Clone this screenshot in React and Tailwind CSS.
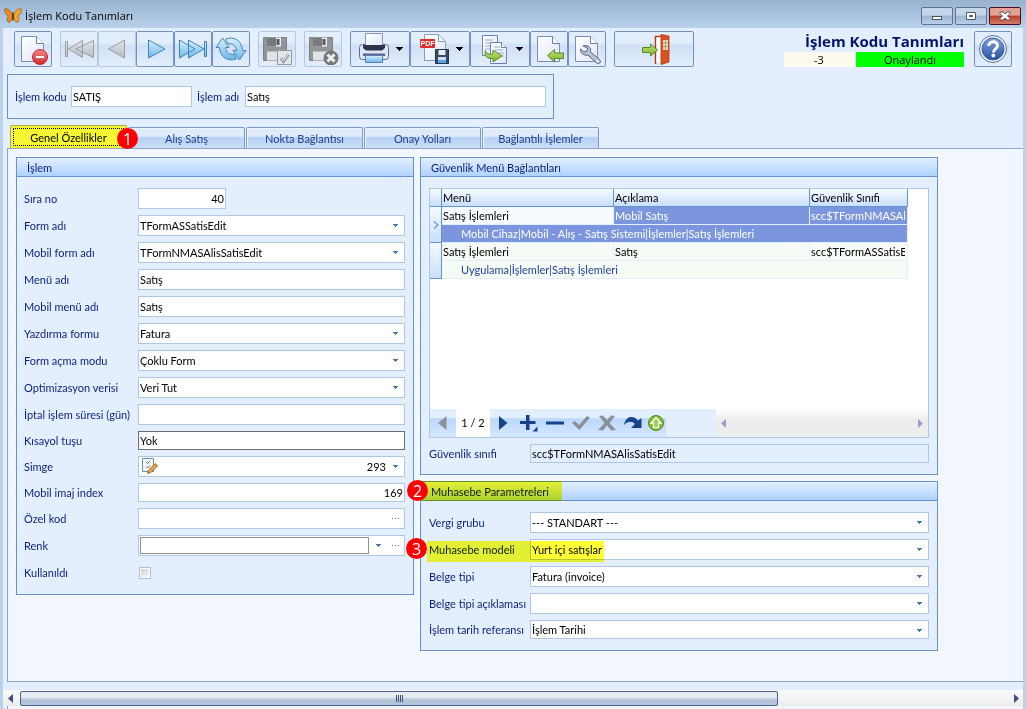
// src/App.jsx
const GRID_ROWS = [
  {
    menu: "Satış İşlemleri",
    desc: "Mobil Satış",
    cls: "scc$TFormNMASAlisSatisEdit",
    path: "Mobil Cihaz|Mobil - Alış - Satış Sistemi|İşlemler|Satış İşlemleri",
    selected: true,
  },
  {
    menu: "Satış İşlemleri",
    desc: "Satış",
    cls: "scc$TFormASSatisEdit",
    path: "Uygulama|İşlemler|Satış İşlemleri",
  },
];

const TABS = ["Genel Özellikler", "Alış Satış", "Nokta Bağlantısı", "Onay Yolları", "Bağlantılı İşlemler"];

const FIELD = "block w-full min-w-0 border bg-white pl-px pr-1 outline-none";

/* ---------- small parts ---------- */

function Badge({ n, className }) {
  return (
    <span
      className={`absolute z-10 flex h-[21px] w-[21px] items-center justify-center rounded-full bg-[#fe0000] font-['Open_Sans',sans-serif] text-base leading-none text-white ${className}`}
    >
      {n}
    </span>
  );
}

function Caret({ className }) {
  return (
    <svg viewBox="0 0 5 3" className={`pointer-events-none absolute h-[3px] w-[5px] ${className}`} shapeRendering="crispEdges">
      <path d="M0 0h5v1H4v1H3v1H2V2H1V1H0z" fill="#4a74b0" />
    </svg>
  );
}

function Dots() {
  return (
    <svg viewBox="0 0 8 1" className="h-px w-2" shapeRendering="crispEdges">
      <path d="M0 0h1v1H0zM3 0h1v1H3zM6 0h1v1H6z" fill="#4a74b0" />
    </svg>
  );
}

function Row({ id, label, labelWidth = "w-[114px]", children }) {
  return (
    <div className="flex items-center">
      <label htmlFor={id} className={`${labelWidth} shrink-0 whitespace-nowrap text-[#0c1f7a]`}>
        {label}
      </label>
      <div className="relative min-w-0 flex-1">{children}</div>
    </div>
  );
}

function TextField({ id, value = "", short, className = "border-[#b1c6e4]" }) {
  return <input id={id} type="text" defaultValue={value} className={`${FIELD} ${short ? "h-[19px]" : "h-[21px]"} ${className}`} />;
}

function SelectField({ id, value = "", short }) {
  return (
    <>
      <select id={id} defaultValue={value} className={`${FIELD} appearance-none border-[#b1c6e4] ${short ? "h-[19px]" : "h-[21px]"}`}>
        <option>{value}</option>
      </select>
      <Caret className="right-[7px] top-[9px]" />
    </>
  );
}

function Panel({ title, highlight, children }) {
  return (
    <section className="relative border border-[#6593cf] bg-[#e3efff]">
      <h2 className="relative h-[19px] border-b border-[#6593cf] bg-linear-to-b from-[#e3efff] to-[#afd2ff] pl-2.5 leading-[19px] text-[#0c1f7a]">
        {title}
        {highlight && <span className="absolute -top-px left-0 h-5 w-[141px] bg-[#ffff33] mix-blend-multiply" />}
      </h2>
      <div className="px-2 py-[11px]">{children}</div>
    </section>
  );
}

/* ---------- toolbar ---------- */

function ToolButton({ label, wide, disabled, menu, children }) {
  return (
    <button
      type="button"
      aria-label={label}
      disabled={disabled}
      className={`flex h-9 items-center justify-center rounded-xs border bg-linear-to-b from-[#e3eefc] from-30% via-[#d0e0f5] via-40% to-[#e3eefc] ${
        disabled ? "border-[#b5c8e2]" : "border-[#7492c0]"
      } ${wide ? "w-20" : menu ? "w-[60px] gap-1.5" : "w-[38px]"}`}
    >
      {children}
      {menu && (
        <svg viewBox="0 0 7 4" className="h-1 w-[7px]" shapeRendering="crispEdges">
          <path d="M0 0h7v1H6v1H5v1H4v1H3V3H2V2H1V1H0z" fill="#000" />
        </svg>
      )}
    </button>
  );
}

function Icon({ children }) {
  return (
    <svg viewBox="0 0 32 32" className="h-8 w-8 shrink-0" fill="none">
      {children}
    </svg>
  );
}

function Gradients() {
  return (
    <svg className="absolute h-0 w-0" aria-hidden="true">
      <defs>
        <linearGradient id="blue" x1="0" y1="0" x2="0" y2="1">
          <stop offset="0" stopColor="#d9f0fd" />
          <stop offset="1" stopColor="#6cb6e8" />
        </linearGradient>
        <linearGradient id="gray" x1="0" y1="0" x2="0" y2="1">
          <stop offset="0" stopColor="#e2e4e8" />
          <stop offset="1" stopColor="#b9bcc2" />
        </linearGradient>
        <linearGradient id="green" x1="0" y1="0" x2="0" y2="1">
          <stop offset="0" stopColor="#c8e67c" />
          <stop offset="1" stopColor="#76b32c" />
        </linearGradient>
        <linearGradient id="page" x1="0" y1="0" x2="1" y2="1">
          <stop offset="0" stopColor="#fff" />
          <stop offset="1" stopColor="#dfe6fa" />
        </linearGradient>
        <linearGradient id="red" x1="0" y1="0" x2="0" y2="1">
          <stop offset="0" stopColor="#f98a84" />
          <stop offset="1" stopColor="#d8232a" />
        </linearGradient>
        <linearGradient id="orb" x1="0" y1="0" x2="0" y2="1">
          <stop offset="0" stopColor="#7fa5e0" />
          <stop offset="1" stopColor="#2450a8" />
        </linearGradient>
      </defs>
    </svg>
  );
}

function Sheet() {
  return (
    <>
      <path d="M4.500 3.500h15l7 7v18h-22z" fill="url(#page)" stroke="#7d8cbd" />
      <path d="M19.500 3.500v7h7" fill="#fff" stroke="#6f7fb5" />
    </>
  );
}

function NewIcon() {
  return (
    <Icon>
      <Sheet />
      <circle cx="23" cy="24" r="7.500" fill="url(#red)" stroke="#c3262c" />
      <rect x="18.500" y="22.500" width="9" height="3" rx=".5" fill="#fff" stroke="#a8383a" strokeWidth=".6" />
    </Icon>
  );
}

function RefreshIcon() {
  return (
    <Icon>
      <path d="M1 14.500 7.500 5l6.500 9.500h-3.500c.5 5 4 7.500 8.500 6.500l2.500 5C13 29 5 24.500 4.500 14.500z" fill="url(#blue)" stroke="#4687b8" />
      <path d="M31 17.500 24.500 27 18 17.500h3.500C21 12.500 17.500 10 13 11L10.500 6C19 3 27 7.500 27.500 17.500z" fill="url(#blue)" stroke="#4687b8" />
    </Icon>
  );
}

function FloppyGray() {
  return (
    <>
      <path d="M2.500 4.500h23v23h-23z" fill="#929497" stroke="#7d7f82" />
      <path d="M6 4.500h14v9H6z" fill="#eceef0" />
      <path d="M6 4.500h9v9H6z" fill="#77797c" />
      <path d="M15.500 6h3v6h-3z" fill="#55575a" />
      <path d="M6 18.500h16v9H6z" fill="#dfe2e6" />
    </>
  );
}

function SaveOkIcon() {
  return (
    <Icon>
      <FloppyGray />
      <rect x="16.500" y="17.500" width="14" height="14" fill="#e1e4e8" stroke="#96999e" />
      <path d="m20 25 2.500 3.500 5-7" stroke="#96999e" strokeWidth="3" />
      <path d="m20.500 25.200 2 2.500 4.500-6" stroke="#f4f5f6" />
    </Icon>
  );
}

function SaveCancelIcon() {
  return (
    <Icon>
      <FloppyGray />
      <circle cx="24" cy="25" r="7" fill="#77797d" stroke="#696b6e" />
      <path d="m20.500 21.500 7 7m0-7-7 7" stroke="#eee" strokeWidth="3" />
    </Icon>
  );
}

function PrintIcon() {
  return (
    <Icon>
      <rect x="1.500" y="11.500" width="29" height="15" rx="3" fill="#dfe6f4" stroke="#5a6998" />
      <path d="M7.500.500h17v14h-17z" fill="url(#page)" stroke="#8b97b8" />
      <path d="M5 12h22v3l-3 2.500H8L5 15z" fill="#2c3548" />
      <path d="M5 20.500h22V23H5z" fill="#59668d" />
      <path d="M7.500 22.500h17v7h-17z" fill="url(#blue)" stroke="#5a7fb4" />
    </Icon>
  );
}

function PdfIcon() {
  return (
    <Icon>
      <path d="M6.500 1.500h14l7 7v19h-21z" fill="url(#page)" stroke="#8a98c4" />
      <path d="M20.500 1.500v7h6" fill="#fff" stroke="#8a98c4" />
      <rect x="2" y="6" width="15" height="9" rx="1" fill="#d62f2a" />
      <text x="9.500" y="13" fontSize="7" fontWeight="bold" fontFamily="Liberation Sans, sans-serif" textAnchor="middle" fill="#fff">
        PDF
      </text>
      <path d="M17.500 16.500h13v14h-13z" fill="#39496c" stroke="#27344f" />
      <path d="M20.500 17h7v5h-7z" fill="#e8edf5" />
      <path d="M20 24h8v6h-8z" fill="#cfdcf0" />
      <path d="M20 27h8v3h-8z" fill="#5aa5e2" />
    </Icon>
  );
}

function CopyIcon() {
  return (
    <Icon>
      <path d="M4.500 2.500h15v20h-15z" fill="url(#page)" stroke="#6f7fb5" />
      <path d="M7 7h8M7 10h6M7 13h6M7 16h5" stroke="#9daad0" />
      <path d="M12.500 9.500h11l5 5v16h-16z" fill="url(#page)" stroke="#6f7fb5" />
      <path d="M23.500 9.500v5h5" fill="#fff" stroke="#6f7fb5" />
      <path d="M16 14h6M17 17h8M20 20h6M20 23h6" stroke="#9daad0" />
      <path d="M7.500 17.500c.5 3.500 3.500 4 7.500 3.500V17l9 6-9 6v-3.500c-5.500.5-9-2-7.500-8z" fill="url(#green)" stroke="#55892a" />
    </Icon>
  );
}

function ImportIcon() {
  return (
    <Icon>
      <Sheet />
      <path d="m14.500 22.500 7-6V20h9v5.500h-9V29z" fill="url(#green)" stroke="#55892a" />
    </Icon>
  );
}

function WrenchIcon() {
  return (
    <Icon>
      <Sheet />
      <path
        d="M12 13c4.500-2 8.500 1.500 7.500 6l9 7.500c2.500 2.500-.5 5.500-3 3.500L17 22c-4.500 1-8-2-7.500-6l3.500 3 3-1 .5-3z"
        fill="#b8c3d6"
        stroke="#56647f"
      />
      <circle cx="26.500" cy="28" r="1" fill="#fff" />
    </Icon>
  );
}

function DoorIcon() {
  return (
    <Icon>
      <path d="M17.500 31V3.500h8" stroke="#b93a16" strokeWidth="1.500" />
      <path d="M18.500 4.500h6v25h-6z" fill="#fff" />
      <path d="M23 1.500 31 3v26l-8 2.500z" fill="#d9521f" stroke="#b13a12" strokeWidth=".8" />
      <path d="M25 7h5v10h-5z" fill="#efe8cf" />
      <path d="M27.500 7v10M25 10h5M25 13.500h5" stroke="#c98a5c" />
      <path d="M4.500 14.500h8V11l7 6-7 6v-3.500h-8z" fill="url(#green)" stroke="#55892a" />
    </Icon>
  );
}

function HelpIcon() {
  return (
    <Icon>
      <circle cx="16" cy="16" r="13.500" fill="#eef3fb" stroke="#5f7396" />
      <circle cx="16" cy="16" r="11" fill="url(#orb)" stroke="#3a5f9f" />
      <path d="M11.800 13c0-5.500 8.700-5.500 8.700-.5 0 3.500-4 3.300-4 7" stroke="#fff" strokeWidth="3" />
      <circle cx="16.300" cy="22.500" r="1.900" fill="#fff" />
    </Icon>
  );
}

function Toolbar() {
  return (
    <div className="flex items-start gap-2 px-[11px] pt-[3px]">
      <ToolButton label="Yeni kayıt"><NewIcon /></ToolButton>
      <div className="flex">
        <ToolButton label="İlk kayıt" disabled>
          <Icon>
            <path d="M2.500 8.500h2v15h-2zM19.500 7.500v17L5.500 16zM30.500 7.500v17L12.500 16z" fill="url(#gray)" stroke="#9b9ea4" />
          </Icon>
        </ToolButton>
        <ToolButton label="Önceki kayıt" disabled>
          <Icon><path d="M23.500 7v18L7.500 16z" fill="url(#gray)" stroke="#9b9ea4" /></Icon>
        </ToolButton>
        <ToolButton label="Sonraki kayıt">
          <Icon><path d="M9.500 7v18l16.500-9z" fill="url(#blue)" stroke="#3d84bb" /></Icon>
        </ToolButton>
        <ToolButton label="Son kayıt">
          <Icon>
            <path d="M27.500 8.500h2v15h-2zM2.500 7v18L18 16zM11.500 7v18L27 16z" fill="url(#blue)" stroke="#3d84bb" />
          </Icon>
        </ToolButton>
        <ToolButton label="Yenile"><RefreshIcon /></ToolButton>
      </div>
      <ToolButton label="Kaydet" disabled><SaveOkIcon /></ToolButton>
      <ToolButton label="Vazgeç" disabled><SaveCancelIcon /></ToolButton>
      <div className="flex">
        <ToolButton label="Yazdır" menu><PrintIcon /></ToolButton>
        <ToolButton label="PDF kaydet" menu><PdfIcon /></ToolButton>
        <ToolButton label="Kopyala" menu><CopyIcon /></ToolButton>
        <ToolButton label="İçe al"><ImportIcon /></ToolButton>
        <ToolButton label="Ayarlar"><WrenchIcon /></ToolButton>
      </div>
      <ToolButton label="Çıkış" wide><DoorIcon /></ToolButton>

      <div className="ml-auto w-[180px] font-['Open_Sans',sans-serif]">
        <h1 className="whitespace-nowrap text-right text-[15px] font-bold leading-[21px] text-[#00146e]">İşlem Kodu Tanımları</h1>
        <div className="flex gap-0.5 text-center text-[11px] leading-4">
          <span className="h-[15px] w-[70px] bg-[#fffaee]">-3</span>
          <span className="h-[15px] flex-1 bg-[#00ff00]">Onaylandı</span>
        </div>
      </div>
      <div className="pl-0.5">
        <ToolButton label="Yardım"><HelpIcon /></ToolButton>
      </div>
    </div>
  );
}

/* ---------- window caption ---------- */

function CaptionButton({ label, close, children }) {
  return (
    <button
      type="button"
      aria-label={label}
      className={`flex h-[18px] w-8 items-center justify-center rounded-xs border ${
        close
          ? "border-[#4a0f1b] bg-linear-to-b from-[#e2a192] from-45% via-[#b93c26] via-50% to-[#d07c68]"
          : "border-[#5c7391] bg-linear-to-b from-[#c3d6ea] from-45% via-[#9db5d0] via-50% to-[#b9d0e8]"
      }`}
    >
      <svg viewBox="0 0 12 10" className="h-2.5 w-3" fill="#fff" stroke="#4b5563">
        {children}
      </svg>
    </button>
  );
}

function TitleBar() {
  return (
    <header className="flex h-7 items-center bg-linear-to-b from-[#98b2cf] to-[#b9d1ea] pl-1 pr-[5px] pt-1">
      <svg viewBox="0 0 18 16" className="mr-[3px] h-4 w-[18px]">
        <path d="M8.500 7C7 2 3 0 .5 1c0 3.500 1.500 6 4 7-2 1.500-1.500 5 0 6.500C7 14 8.500 11 8.500 8z" fill="#e88a1c" stroke="#8a4a0a" strokeWidth=".6" />
        <path d="M9.500 7C11 2 15 0 17.500 1c0 3.500-1.500 6-4 7 2 1.500 1.500 5 0 6.500C11 14 9.500 11 9.500 8z" fill="#f2a52b" stroke="#8a4a0a" strokeWidth=".6" />
        <path d="M9 4.500v8" stroke="#3b2208" strokeWidth="1.300" />
      </svg>
      <span className="font-['Open_Sans',sans-serif] text-[11px] text-black">İşlem Kodu Tanımları</span>
      <div className="ml-auto flex gap-0.5">
        <CaptionButton label="Simge durumuna küçült"><rect x="1.500" y="5.500" width="9" height="3" /></CaptionButton>
        <CaptionButton label="Ekranı kapla">
          <path d="M1.500 1.500h9v7h-9zM4.500 4.500h3v1h-3z" fillRule="evenodd" />
        </CaptionButton>
        <CaptionButton label="Kapat" close>
          <path d="M1 1h3l2 2 2-2h3v1.500L8.500 5 11 7.500V9H8L6 7 4 9H1V7.500L3.500 5 1 2.500z" />
        </CaptionButton>
      </div>
    </header>
  );
}

/* ---------- header fields and tabs ---------- */

function HeaderFields() {
  return (
    <div className="ml-1 mt-[7px] flex h-[45px] w-[547px] items-center border border-[#6593cf] px-[7px] text-[#0c1f7a]">
      <label htmlFor="kod" className="w-14 shrink-0 whitespace-nowrap">İşlem kodu</label>
      <input id="kod" defaultValue="SATIŞ" className="h-[21px] w-[121px] border border-[#b1c6e4] bg-white pl-px text-black outline-none" />
      <label htmlFor="ad" className="ml-[5px] w-12 shrink-0 whitespace-nowrap">İşlem adı</label>
      <input id="ad" defaultValue="Satış" className="h-[21px] min-w-0 flex-1 border border-[#b1c6e4] bg-white pl-px text-black outline-none" />
    </div>
  );
}

function TabBar() {
  return (
    <div role="tablist" className="mt-1.5 flex h-[23px] items-end gap-px pl-[7px]">
      {TABS.map((tab, i) => (
        <div key={tab} className="relative">
          <button
            type="button"
            role="tab"
            aria-selected={i === 0}
            className={
              i === 0
                ? "block h-[23px] w-[117px] rounded-t-xs border border-b-0 border-[#a9a94c] bg-[#f6f733] p-0.5 text-black"
                : "block h-[21px] w-[117px] rounded-t-xs border border-b-0 border-[#7f9cc9] bg-linear-to-b from-[#dfebfb] from-40% via-[#b7d1f5] via-50% to-[#c9def8] pt-0.5 text-[#1e3f8e] shadow-[inset_1px_1px_0_#eef5ff]"
            }
          >
            {i === 0 ? <span className="block h-[18px] border border-dotted border-black leading-[18px]">{tab}</span> : tab}
          </button>
          {i === 0 && <Badge n={1} className="left-[107px] top-[3px]" />}
        </div>
      ))}
    </div>
  );
}

/* ---------- panels ---------- */

function ProcessPanel() {
  return (
    <Panel title="İşlem">
      <div className="-ml-px flex flex-col gap-1.5">
        <Row id="sira" label="Sıra no">
          <input id="sira" defaultValue="40" className="block h-[21px] w-[88px] border border-[#b1c6e4] bg-white pr-px text-right outline-none" />
        </Row>
        <Row id="form" label="Form adı"><SelectField id="form" value="TFormASSatisEdit" /></Row>
        <Row id="mform" label="Mobil form adı"><SelectField id="mform" value="TFormNMASAlisSatisEdit" /></Row>
        <Row id="menu" label="Menü adı"><TextField id="menu" value="Satış" /></Row>
        <Row id="mmenu" label="Mobil menü adı"><TextField id="mmenu" value="Satış" /></Row>
        <Row id="yazdirma" label="Yazdırma formu"><SelectField id="yazdirma" value="Fatura" /></Row>
        <Row id="acma" label="Form açma modu"><SelectField id="acma" value="Çoklu Form" /></Row>
        <Row id="opt" label="Optimizasyon verisi"><SelectField id="opt" value="Veri Tut" /></Row>
        <Row id="iptal" label="İptal işlem süresi (gün)"><TextField id="iptal" /></Row>
        <Row id="kisayol" label="Kısayol tuşu"><TextField id="kisayol" value="Yok" short className="border-[#6d6d6d]" /></Row>
        <Row id="simge" label="Simge">
          <input id="simge" defaultValue="293" className="block h-[21px] w-full border border-[#b1c6e4] bg-white pr-[18px] text-right outline-none" />
          <svg viewBox="0 0 16 16" className="pointer-events-none absolute left-1 top-0.5 h-4 w-4">
            <path d="M.5.500h11v13H.5z" fill="#f4f8ff" stroke="#7488b8" />
            <path d="m4 4 1.500 1.500L8 3M4 8.500 5.500 10 8 7.500" fill="none" stroke="#3a7a2b" />
            <path d="M13.500 5.500 15.500 8 9 14.500l-3.500 1 1-3.500z" fill="#e9a348" stroke="#8a5a1f" strokeWidth=".8" />
          </svg>
          <Caret className="right-[7px] top-[9px]" />
        </Row>
        <Row id="imaj" label="Mobil imaj index">
          <input id="imaj" defaultValue="169" className="block h-[19px] w-full border border-[#b1c6e4] bg-white pr-px text-right outline-none" />
          <Badge n={2} className="-right-[23px] -top-[3px]" />
        </Row>
        <Row id="ozel" label="Özel kod">
          <TextField id="ozel" />
          <button type="button" aria-label="Özel kod seç" className="absolute right-0 top-0 flex h-full w-[19px] items-center justify-center"><Dots /></button>
        </Row>
        <Row id="renk" label="Renk">
          <div className="flex h-[21px] items-center border border-[#b1c6e4] bg-white pl-px">
            <input id="renk" className="h-[17px] min-w-0 flex-1 border border-[#8f8f8f] outline-none" />
            <span className="w-[35px]" />
          </div>
          <Caret className="right-6 top-[9px]" />
          <button type="button" aria-label="Renk seç" className="absolute right-0 top-0 flex h-full w-[19px] items-center justify-center"><Dots /></button>
          <Badge n={3} className="-right-[22px] top-[3px]" />
        </Row>
        <Row id="kullanildi" label="Kullanıldı">
          <div className="flex h-[21px] items-center pl-px">
            <input
              id="kullanildi"
              type="checkbox"
              className="h-3 w-3 appearance-none border border-[#a9c0e0] bg-linear-to-br from-[#c9ced6] to-[#fbfbfb] shadow-[inset_0_0_0_1px_#fff]"
            />
          </div>
        </Row>
      </div>
    </Panel>
  );
}

function SecurityTable() {
  return (
    <table className="w-[calc(100%-20px)] table-fixed border-separate border-spacing-0">
      <colgroup>
        <col className="w-3" />
        <col className="w-[172px]" />
        <col />
        <col className="w-[98px]" />
      </colgroup>
      <thead>
        <tr className="h-[18px]">
          {["", "Menü", "Açıklama", "Güvenlik Sınıfi"].map((h, i) => (
            <th
              key={i}
              className="border-b border-r border-[#6593cf] bg-linear-to-b from-[#f8fbff] to-[#c9dffb] p-0 pl-px text-left font-normal leading-[17px]"
            >
              {h}
            </th>
          ))}
        </tr>
      </thead>
      {GRID_ROWS.map((row) => {
        const cell = row.selected ? "bg-[#7b96df] text-white" : "bg-[#f5fcf5]";
        return (
          <tbody key={row.path} className="leading-[17px]">
            <tr className="h-[18px]">
              <td rowSpan={2} className="border-b border-r border-[#6593cf] bg-linear-to-b from-[#f4f9ff] to-[#c9dffb] p-0">
                {row.selected && (
                  <svg viewBox="0 0 6 8" className="mx-auto h-2 w-1.5" fill="none">
                    <path d="m1 .5 4 3.500-4 3.500" stroke="#6f9fdc" strokeWidth="1.500" />
                  </svg>
                )}
              </td>
              <td className={`border-b border-r border-[#e3efff] p-0 pl-px ${row.selected ? "bg-[#f5fbff]" : "bg-[#f5fcf5]"}`}>{row.menu}</td>
              <td className={`border-b border-r border-[#e3efff] p-0 pl-px ${cell}`}>{row.desc}</td>
              <td className={`border-b border-r border-[#e3efff] p-0 pl-px pr-0.5 ${cell}`}>
                <div className="overflow-hidden whitespace-nowrap">{row.cls}</div>
              </td>
            </tr>
            <tr className="h-[18px]">
              <td
                colSpan={3}
                className={`border-b border-r border-[#e3efff] p-0 pl-[19px] ${row.selected ? "bg-[#7b96df] text-white" : "bg-[#f5fcf5] text-[#1e3f9e]"}`}
              >
                {row.path}
              </td>
            </tr>
          </tbody>
        );
      })}
    </table>
  );
}

function NavButton({ label, width = "w-[26px]", children }) {
  return (
    <button type="button" aria-label={label} className={`flex shrink-0 items-center justify-center ${width}`}>
      <svg viewBox="0 0 18 18" className="h-[18px] w-[18px] shrink-0" fill="#15428b">
        {children}
      </svg>
    </button>
  );
}

function Navigator() {
  return (
    <div className="flex h-7 bg-[#e3efff]">
      <div className="flex w-[236px] bg-linear-to-b from-[#e3efff] from-30% via-[#bcd8ff] via-35% to-[#d5e7ff]">
        <NavButton label="Önceki"><path d="M12.500 2v14L4 9z" fill="#8d9096" /></NavButton>
        <span className="flex w-[34px] shrink-0 items-center justify-center bg-white">1 / 2</span>
        <NavButton label="Sonraki"><path d="M5 2v14l8.500-7z" /></NavButton>
        <NavButton label="Ekle"><path d="M6 1h3.500v6h6v3h-6v6H6v-6H0V7h6zM17.500 12.500v5h-5z" /></NavButton>
        <NavButton label="Sil"><path d="M0 7.500h18v3H0z" /></NavButton>
        <NavButton label="Onayla"><path d="m0 9 3-2 4 4 8-9 3 1.500L7.500 16z" fill="#8d9096" /></NavButton>
        <NavButton label="İptal"><path d="m1 2 4-.5L9 6l4-4.500 4 .5-5.500 7 6.500 7-5 .5-4-5-4 5-5-.5 6.500-7z" fill="#8d9096" /></NavButton>
        <NavButton label="Yenile"><path d="M0 11C2 2 9 1 14 6.500L17.500 4v10H7l4-4C7.500 6.500 3.500 7.500 0 11z" /></NavButton>
        <NavButton label="Yukarı" width="w-5">
          <circle cx="9" cy="9" r="7.500" fill="#84bf2f" stroke="#4c8a1b" />
          <path d="m9 3.500 5 5.500h-2.500v4.500h-5V9H4z" fill="#9ccc4a" stroke="#fff" strokeWidth="1.300" />
        </NavButton>
      </div>
      <div className="flex-1" />
      <div className="flex w-[212px] items-center justify-between bg-linear-to-b from-white to-[#ededed] to-40% px-[5px]">
        <svg viewBox="0 0 5 9" className="h-[9px] w-[5px]"><path d="M5 0v9L0 4.500z" fill="#93a3c8" /></svg>
        <svg viewBox="0 0 5 9" className="h-[9px] w-[5px]"><path d="M0 0v9l5-4.500z" fill="#93a3c8" /></svg>
      </div>
    </div>
  );
}

function SecurityPanel() {
  return (
    <Panel title="Güvenlik Menü Bağlantıları">
      <div className="flex h-[250px] flex-col justify-between border border-[#b1c6e4] bg-white">
        <SecurityTable />
        <Navigator />
      </div>
      <div className="mt-1.5">
        <Row id="sinif" label="Güvenlik sınıfi" labelWidth="w-[101px]">
          <input
            id="sinif"
            readOnly
            value="scc$TFormNMASAlisSatisEdit"
            className="block h-[19px] w-full border border-[#b1c6e4] bg-[#e3efff] pl-px outline-none"
          />
        </Row>
      </div>
    </Panel>
  );
}

function AccountingPanel() {
  return (
    <Panel title="Muhasebe Parametreleri" highlight>
      <div className="flex flex-col gap-1.5">
        <Row id="vergi" label="Vergi grubu" labelWidth="w-[101px]"><SelectField id="vergi" value="--- STANDART ---" /></Row>
        <div className="relative">
          <Row id="model" label="Muhasebe modeli" labelWidth="w-[101px]"><SelectField id="model" value="Yurt içi satışlar" /></Row>
          <span className="pointer-events-none absolute -left-0.5 top-0.5 h-[21px] w-[177px] bg-[#ffff33] mix-blend-multiply" />
        </div>
        <Row id="belge" label="Belge tipi" labelWidth="w-[101px]"><SelectField id="belge" value="Fatura (invoice)" /></Row>
        <Row id="belgeac" label="Belge tipi açıklaması" labelWidth="w-[101px]"><SelectField id="belgeac" /></Row>
        <Row id="tarih" label="İşlem tarih referansı" labelWidth="w-[101px]"><SelectField id="tarih" value="İşlem Tarihi" short /></Row>
      </div>
    </Panel>
  );
}

function ScrollBar() {
  return (
    <div className="mt-2 flex h-4 items-center bg-linear-to-b from-[#fbfbfb] to-[#ececec] pl-[5px] pr-1">
      <svg viewBox="0 0 5 9" className="mr-[7px] h-[9px] w-[5px]"><path d="M5 0v9L0 4.500z" fill="#3d4f7d" /></svg>
      <div className="flex h-[15px] w-3/4 items-center justify-center gap-px rounded-xs border border-[#4d6090] bg-linear-to-b from-[#e6ecf1] from-40% to-[#b3c4da] to-60%">
        <span className="h-[7px] w-px bg-[#3d4f7d]" />
        <span className="h-[7px] w-px bg-[#3d4f7d]" />
        <span className="h-[7px] w-px bg-[#3d4f7d]" />
        <span className="h-[7px] w-px bg-[#3d4f7d]" />
      </div>
      <svg viewBox="0 0 5 9" className="ml-auto h-[9px] w-[5px]"><path d="M0 0v9l5-4.500z" fill="#3d4f7d" /></svg>
    </div>
  );
}

export default function App() {
  return (
    <div className="flex min-h-screen flex-col bg-[#b9d1ea] font-[Lato,'Noto_Sans',sans-serif] text-[11px] leading-[14px] text-black">
      <Gradients />
      <TitleBar />
      <div className="mx-[3px] flex flex-1 flex-col bg-[#e3efff]">
        <Toolbar />
        <HeaderFields />
        <TabBar />
        <main className="ml-1 flex flex-1 items-start gap-1.5 border-y border-l border-[#8fa5c7] bg-[#f2f7ff] pb-[30px] pl-2 pr-[85px] pt-2">
          <div className="min-w-0 flex-[398_1_0%]"><ProcessPanel /></div>
          <div className="flex min-w-0 flex-[518_1_0%] flex-col gap-1.5">
            <SecurityPanel />
            <AccountingPanel />
          </div>
        </main>
        <ScrollBar />
        <div className="ml-1 h-[3px] border-l border-[#8fa5c7] bg-[#f2f7ff]" />
      </div>
    </div>
  );
}
